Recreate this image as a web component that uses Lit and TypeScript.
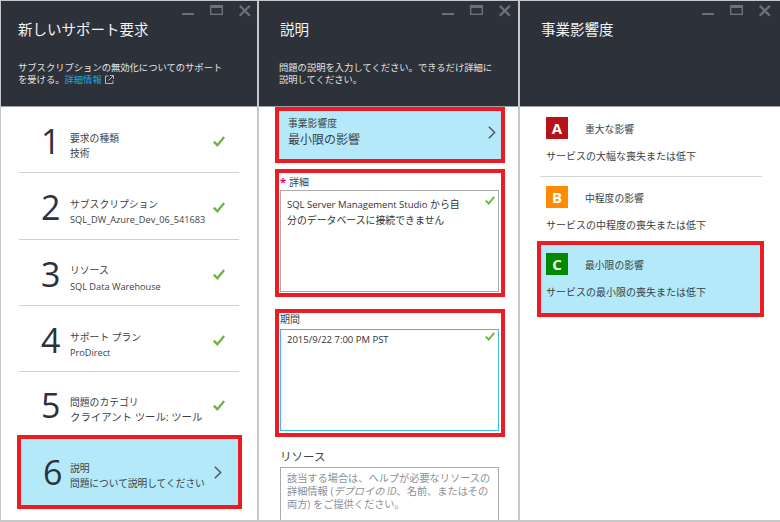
import { LitElement, html, css, svg } from "lit";
import { customElement } from "lit/decorators.js";

const check = html`<svg class="check" width="12" height="11" viewBox="0 0 12 11"><path d="M.8 5.6 L4.4 9.2 L11.2 1" fill="none" stroke="#6cb33f" stroke-width="2.3"/></svg>`;
const chev = html`<svg class="chev" width="8" height="13" viewBox="0 0 8 13"><path d="M.8 .8 L6.6 6.5 L.8 12.2" fill="none" stroke="#505660" stroke-width="1.5"/></svg>`;
const controls = html`<div class="controls">
  <svg width="81" height="14" viewBox="0 0 81 14">
    ${svg`<rect x="12" y="10" width="12" height="2" fill="#6b7079"/>
    <rect x="40.7" y="2.7" width="11.6" height="8.6" fill="none" stroke="#6b7079" stroke-width="1.4"/>
    <rect x="40" y="2" width="13" height="3" fill="#6b7079"/>
    <path d="M69.7 2.7 L79.8 12.8 M79.8 2.7 L69.7 12.8" stroke="#6b7079" stroke-width="2.3"/>`}
  </svg>
</div>`;

const steps = [
  ["1", "要求の種類", "技術", ""],
  ["2", "サブスクリプション", "SQL_DW_Azure_Dev_06_541683", "lat"],
  ["3", "リソース", "SQL Data Warehouse", "lat"],
  ["4", "サポート プラン", "ProDirect", "lat"],
  ["5", "問題のカテゴリ", "クライアント ツール: ツール", "lg"],
];

const impacts = [
  ["A", "#b5121b", "重大な影響", "サービスの大幅な喪失または低下"],
  ["B", "#ff8c00", "中程度の影響", "サービスの中程度の喪失または低下"],
];

@customElement("app-root")
export class AppRoot extends LitElement {
  static styles = css`
    :host {
      display: grid;
      grid-template-columns: 256px 259px 260px;
      column-gap: 2px;
      width: 780px;
      height: 522px;
      box-sizing: border-box;
      padding: 1px 0 2px 1px;
      background: #c6c7c8;
      overflow: hidden;
      font-family: "Open Sans", "Noto Sans CJK JP", sans-serif;
      color: #3a3f47;
      font-size: 10px;
    }
    .panel { background: #fff; height: 519px; overflow: hidden; display: flex; flex-direction: column; }
    .head {
      flex: none;
      height: 106px;
      box-sizing: border-box;
      background: #2d323a;
      border-bottom: 1px solid #9ea1a5;
      color: #fff;
      padding: 0 0 0 17px;
    }
    .p2 .head { padding-left: 21px; }
    .p3 .head { padding-left: 21px; }
    .controls { height: 17px; display: flex; justify-content: flex-end; padding-right: 6px; }
    .p2 .controls { padding-right: 7px; }
    .p3 .controls { padding-right: 9px; }
    .controls svg { display: block; margin-top: 2px; }
    h1 { margin: 0; font-size: 14.5px; font-weight: 400; line-height: 20px; padding-top: 2px; color: #f4f4f4; }
    .desc { margin: 22px 0 0; font-size: 9.3px; line-height: 12px; color: #e2e3e4; width: 205px; }
    .p2 .desc { margin-left: -1px; width: 216px; }
    .link { color: #1aa9e0; }
    .ext { vertical-align: -1px; margin-left: 3px; }

    .step {
      margin: 0 18px;
      height: 66.33px;
      box-sizing: border-box;
      border-bottom: 1px solid #cfd0d1;
      display: flex;
      align-items: center;
    }
    .step:first-of-type { height: 67px; }
    .step.nb { border-bottom: 0; height: 63px; }
    .num { width: 51px; padding-left: 22px; box-sizing: border-box; font-size: 34px; line-height: 40px; color: #2d323a; flex: none; margin-top: 3px; }
    .st { flex: 1; min-width: 0; margin-top: 13px; }
    .st div { line-height: 15.5px; white-space: nowrap; font-size: 9.8px; }
    .st .lat { font-size: 9.2px; }
    .st .lg { font-size: 10.4px; }
    .step .check { margin-right: 14px; margin-top: 4px; flex: none; }
    .cur {
      margin: 0 15px 0 16px;
      height: 74px;
      flex: none;
      box-sizing: border-box;
      border: 4px solid #ec1c24;
      background: #b3e9f9;
      display: flex;
      align-items: center;
      padding-left: 2px;
    }
    .cur .num { width: 47px; padding-left: 20px; margin-top: 0; }
    .cur .st { margin-top: 8px; }
    .cur .chev { margin-right: 16px; flex: none; }
    .cur .st .lg { font-size: 9.7px; }

    .biz {
      margin: 0 13px 0 16px;
      height: 56px;
      flex: none;
      box-sizing: border-box;
      border: 4px solid #ec1c24;
      background: #b3e9f9;
      padding: 0 9px 6px;
      display: flex;
      align-items: center;
      justify-content: space-between;
    }
    .biz .t1 { font-size: 9.8px; line-height: 14px; }
    .biz .t2 { font-size: 12px; line-height: 14px; margin-top: 2px; }
    .biz .chev { margin-right: -4px; }
    .box {
      margin: 6px 13px 0 16px;
      box-sizing: border-box;
      border: 4px solid #ec1c24;
      height: 128px;
      padding: 2px 2px 0 1px;
      flex: none;
    }
    .lbl { font-size: 10px; line-height: 13px; height: 15px; }
    .star { color: #e5007e; font-weight: 700; margin-right: 3px; font-size: 11px; }
    .ta {
      border: 1.5px solid #a8abad;
      height: 102px;
      box-sizing: border-box;
      padding: 6px 6px 5px;
      font-size: 9.9px;
      line-height: 14.5px;
      display: flex;
      justify-content: space-between;
      align-items: flex-start;
      color: #30343a;
    }
    .la { font-size: 9.5px; }
    .ta .check { flex: none; margin: -1px -3px 0 0; width: 10px; height: 9px; }
    .box.focus { margin-top: 12px; padding-top: 0; }
    .box.focus .lbl { height: 16px; }
    .box.focus .ta { border-color: #3cbde8; padding-top: 3px; }
    .res { margin: 12px 19px 0 21px; flex: none; }
    .res .l { font-size: 11.5px; line-height: 16px; color: #3a3f47; }
    .res .ph {
      margin-top: 2px;
      height: 70px;
      box-sizing: border-box;
      border: 1px solid #a8abad;
      padding: 4px 2px 4px 6px;
      font-size: 10.2px;
      line-height: 13px;
      color: #8d9095;
    }
    .res em { font-style: italic; }

    .impact { margin: 0 18px 0 20px; }
    .impact.a { border-bottom: 1px solid #d6d7d8; height: 70px; box-sizing: border-box; padding-top: 10px; }
    .impact.b { height: 64px; padding-top: 9px; box-sizing: border-box; }
    .impact.c {
      margin: 0 16px 0 17px;
      height: 76px;
      box-sizing: border-box;
      border: 4px solid #ec1c24;
      background: #b3e9f9;
      padding: 8px 5px;
    }
    .ihead { display: flex; align-items: center; margin-left: 6px; }
    .impact.c .ihead { margin-left: 0; }
    .badge {
      width: 22px; height: 22px; flex: none;
      color: #fff; font-weight: 700; font-size: 15px; line-height: 22px; text-align: center;
      margin-right: 17px;
      font-family: "Open Sans", sans-serif;
    }
    .ititle { font-size: 9.8px; margin-top: 1px; }
    .idesc { font-size: 10px; line-height: 14px; margin: 10px 0 0 6px; white-space: nowrap; }
    .impact.c .idesc { margin-left: 0; }
  `;

  render() {
    return html`
      <section class="panel p1">
        <div class="head">
          ${controls}
          <h1>新しいサポート要求</h1>
          <p class="desc">サブスクリプションの無効化についてのサポートを受ける。<span class="link">詳細情報</span><svg class="ext" width="9" height="9" viewBox="0 0 9 9"><path d="M3.5 1 H.5 V8.5 H8 V5.5 M5 .5 H8.5 V4 M8.5 .5 L3.5 5.5" fill="none" stroke="#b5b7ba"/></svg></p>
        </div>
        ${steps.map(([n, a, b, k], i) => html`
          <div class="step ${i === 4 ? "nb" : ""}">
            <div class="num">${n}</div>
            <div class="st"><div>${a}</div><div class="${k}">${b}</div></div>
            ${check}
          </div>`)}
        <div class="cur">
          <div class="num">6</div>
          <div class="st"><div>説明</div><div class="lg">問題について説明してください</div></div>
          ${chev}
        </div>
      </section>

      <section class="panel p2">
        <div class="head">
          ${controls}
          <h1>説明</h1>
          <p class="desc">問題の説明を入力してください。できるだけ詳細に説明してください。</p>
        </div>
        <div class="biz">
          <div><div class="t1">事業影響度</div><div class="t2">最小限の影響</div></div>
          ${chev}
        </div>
        <div class="box">
          <div class="lbl"><span class="star">*</span>詳細</div>
          <div class="ta"><span><span class="la">SQL Server Management Studio</span> から自<br />分のデータベースに接続できません</span>${check}</div>
        </div>
        <div class="box focus">
          <div class="lbl">期間</div>
          <div class="ta"><span class="la">2015/9/22 7:00 PM PST</span>${check}</div>
        </div>
        <div class="res">
          <div class="l">リソース</div>
          <div class="ph">該当する場合は、ヘルプが必要なリソースの詳細情報 (<em>デプロイの ID</em>、名前、またはその両方) をご提供ください。</div>
        </div>
      </section>

      <section class="panel p3">
        <div class="head">
          ${controls}
          <h1>事業影響度</h1>
        </div>
        ${impacts.map(([l, c, t, d], i) => html`
          <div class="impact ${i === 0 ? "a" : "b"}">
            <div class="ihead"><div class="badge" style="background:${c}">${l}</div><div class="ititle">${t}</div></div>
            <div class="idesc">${d}</div>
          </div>`)}
        <div class="impact c">
          <div class="ihead"><div class="badge" style="background:#008a00">C</div><div class="ititle">最小限の影響</div></div>
          <div class="idesc">サービスの最小限の喪失または低下</div>
        </div>
      </section>
    `;
  }
}
